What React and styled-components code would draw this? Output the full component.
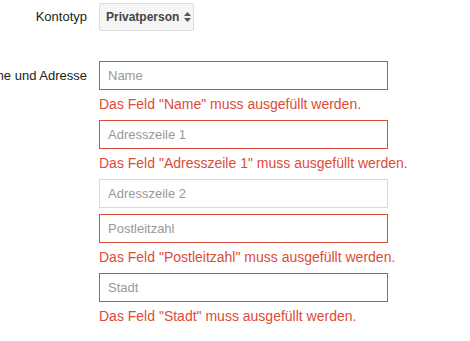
import styled, { createGlobalStyle } from "styled-components";

const GlobalStyle = createGlobalStyle`
  body {
    margin: 0;
    background: #fff;
    font-family: "Liberation Sans", Arial, sans-serif;
    overflow: hidden;
  }
`;

const Form = styled.div`
  display: flex;
  flex-direction: column;
  gap: 30px;
  padding-top: 3px;
  width: 470px;
`;

const Row = styled.div`
  display: flex;
  align-items: flex-start;
  gap: 12px;
`;

const Label = styled.div`
  width: 87px;
  flex-shrink: 0;
  display: flex;
  justify-content: flex-end;
  white-space: nowrap;
  font-size: 13px;
  color: #222;
  line-height: ${(p) => p.$lh || "28px"};
`;

const Fields = styled.div`
  display: flex;
  flex-direction: column;
  gap: 6px;
`;

const SelectButton = styled.div`
  display: flex;
  align-items: center;
  gap: 5px;
  box-sizing: border-box;
  height: 28px;
  width: 95px;
  padding: 0 0 0 6px;
  background: #f5f5f5;
  border: 1px solid #dcdcdc;
  border-radius: 2px;
  font-size: 12px;
  font-weight: bold;
  color: #444;
`;

const Input = styled.div`
  box-sizing: border-box;
  width: 289px;
  height: 29px;
  padding: 0 8px;
  border: 1px solid ${(p) => (p.$error ? "#dd4b39" : "#d9d9d9")};
  font-size: 13px;
  line-height: 27px;
  color: #999;
`;

const Error = styled.div`
  font-size: 14px;
  line-height: 17px;
  padding: 6px 0 1px;
  color: #dd4b39;
  white-space: nowrap;
`;

const Group = styled.div`
  display: flex;
  flex-direction: column;
`;

function SortIcon() {
  return (
    <svg width="7" height="11" viewBox="0 0 7 11">
      <path d="M3.5 0 L7 4 L0 4 Z M0 6 L7 6 L3.5 10 Z" fill="#555" />
    </svg>
  );
}

const fields = [
  { name: "Name", error: true },
  { name: "Adresszeile 1", error: true },
  { name: "Adresszeile 2", error: false },
  { name: "Postleitzahl", error: true },
  { name: "Stadt", error: true },
];

export default function App() {
  return (
    <>
      <GlobalStyle />
      <Form>
        <Row>
          <Label>Kontotyp</Label>
          <SelectButton>
            Privatperson
            <SortIcon />
          </SelectButton>
        </Row>
        <Row>
          <Label $lh="29px">Name und Adresse</Label>
          <Fields>
            {fields.map((f) => (
              <Group key={f.name}>
                <Input $error={f.error}>{f.name}</Input>
                {f.error && (
                  <Error>Das Feld "{f.name}" muss ausgefüllt werden.</Error>
                )}
              </Group>
            ))}
          </Fields>
        </Row>
      </Form>
    </>
  );
}
